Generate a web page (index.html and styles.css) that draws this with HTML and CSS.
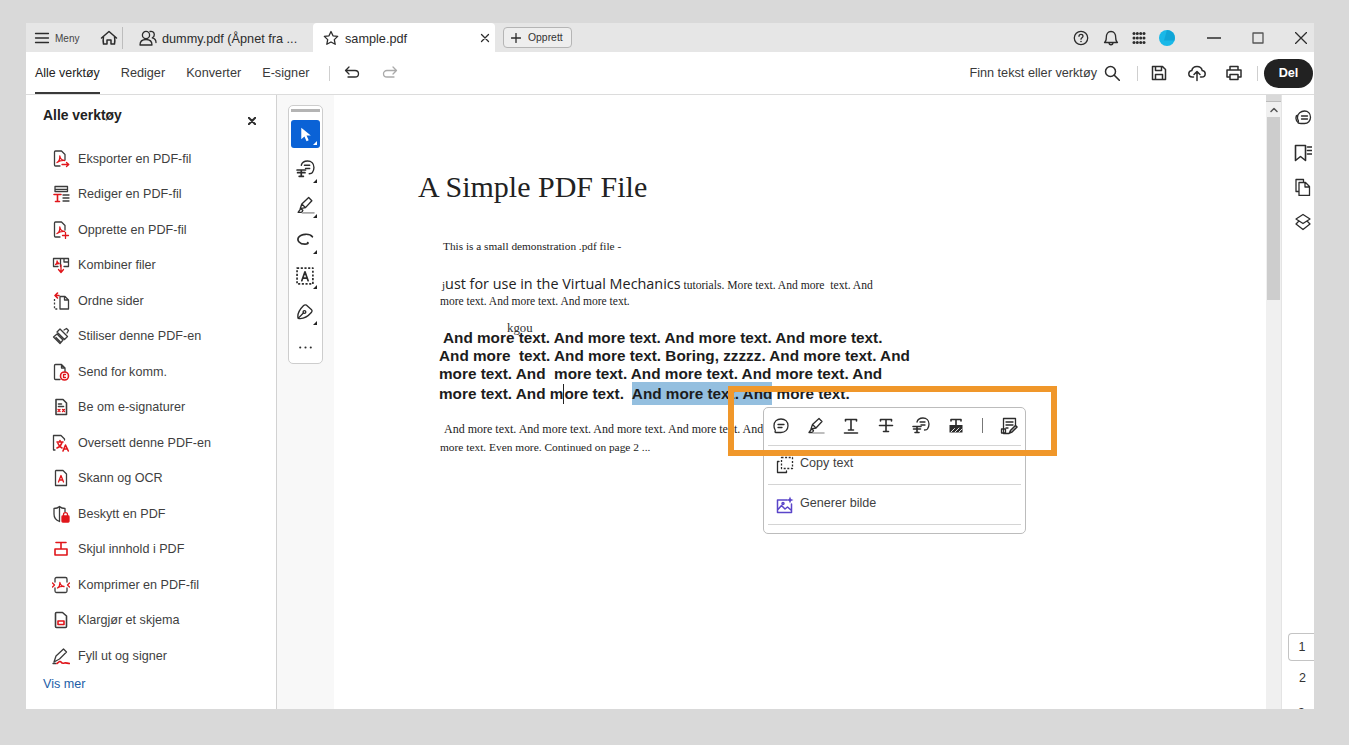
FILE: index.html
```html
<!DOCTYPE html>
<html lang="nb">
<head>
<meta charset="utf-8">
<title>sample.pdf</title>
<link rel="stylesheet" href="styles.css">
</head>
<body>
<div class="app">
  <header class="titlebar">
    <div class="menu">
      <svg class="ic16" viewBox="0 0 16 16"><path d="M1.500 3.500h13M1.500 8h13M1.500 12.500h13"/></svg>
      <span class="menu-label">Meny</span>
    </div>
    <svg class="ic18 home" viewBox="0 0 18 18"><path d="M1.500 9 9 2.500 16.500 9M3.500 7.500c-.5 3 -.5 5 0 7.500h3.500v-4h4v4h3.500c.5-2.500.5-4.500 0-7.500"/></svg>
    <div class="tab tab-dummy">
      <svg class="ic18" viewBox="0 0 18 18"><circle cx="7" cy="6" r="3.600"/><path d="M1 16c0-3.500 2.500-5.500 6-5.500s6 2 6 5.500zM11 2.500c2.500-.6 4.300 1 4.300 3.200 0 1.500-.8 2.600-2 3.200 2 .5 3.700 2.300 3.700 4.600"/></svg>
      <span class="tab-text">dummy.pdf (Åpnet fra ...</span>
    </div>
    <div class="tab tab-active">
      <svg class="ic16" viewBox="0 0 16 16"><path d="m8 1.500 2 4.300 4.700.6-3.400 3.200.9 4.700L8 12l-4.200 2.300.9-4.700L1.300 6.400 6 5.800z"/></svg>
      <span class="tab-text tab-name">sample.pdf</span>
      <svg class="ic10" viewBox="0 0 10 10"><path d="m1.500 1.500 7 7m0-7-7 7"/></svg>
    </div>
    <button class="create"><svg class="ic10" viewBox="0 0 10 10"><path d="M5 .5v9M.5 5h9"/></svg><span>Opprett</span></button>
    <div class="title-right">
      <svg class="ic16 t-help" viewBox="0 0 16 16"><circle cx="8" cy="8" r="6.700"/><path d="M6 6.300C6 5 7 4.400 8 4.400s2 .7 2 1.800c0 1.500-2 1.500-2 3"/><circle class="fill" cx="8" cy="11.500" r=".8"/></svg>
      <svg class="ic16 t-bell" viewBox="0 0 16 16"><path d="M1.500 12.500c1.500-1 1.800-2.500 1.800-5C3.300 4 5 1.500 8 1.500s4.700 2.500 4.700 6c0 2.500.3 4 1.800 5zM6 12.500c0 3 4 3 4 0"/></svg>
      <svg class="ic14 t-grid" viewBox="0 0 14 14"><g class="fill"><circle cx="2" cy="2.500" r="1.500"/><circle cx="5.300" cy="2.500" r="1.500"/><circle cx="8.700" cy="2.500" r="1.500"/><circle cx="12" cy="2.500" r="1.500"/><circle cx="2" cy="7" r="1.500"/><circle cx="5.300" cy="7" r="1.500"/><circle cx="8.700" cy="7" r="1.500"/><circle cx="12" cy="7" r="1.500"/><circle cx="2" cy="11.500" r="1.500"/><circle cx="5.300" cy="11.500" r="1.500"/><circle cx="8.700" cy="11.500" r="1.500"/><circle cx="12" cy="11.500" r="1.500"/></g></svg>
      <svg class="avatar" viewBox="0 0 16 16"><circle cx="8" cy="8" r="8" fill="#19b8e8"/><path d="M8 0a8 8 0 0 1 7.500 10.500H5z" fill="#0d9fd2" opacity=".75"/></svg>
      <svg class="ic14 t-min" viewBox="0 0 14 14"><path class="thick" d="M.5 7h13"/></svg>
      <svg class="ic12 t-max" viewBox="0 0 12 12"><rect x="1" y="1" width="10" height="10"/></svg>
      <svg class="ic12 t-close" viewBox="0 0 12 12"><path d="m.5.5 11 11m0-11-11 11"/></svg>
    </div>
  </header>

  <nav class="toolbar">
    <a class="nav nav-first">Alle verktøy</a>
    <a class="nav">Rediger</a>
    <a class="nav">Konverter</a>
    <a class="nav">E-signer</a>
    <span class="vsep sep-nav"></span>
    <svg class="ic16 undo" viewBox="0 0 16 16"><path d="M5 2 1.500 5.500 5 9M1.500 5.500H11c2 0 3.500 1.300 3.500 3.200S13 12 11 12H4"/></svg>
    <svg class="ic16 redo" viewBox="0 0 16 16"><path d="M11 2l3.500 3.500L11 9M14.500 5.500H5c-2 0-3.500 1.300-3.500 3.200S3 12 5 12h7"/></svg>
    <div class="tool-right">
      <span class="find">Finn tekst eller verktøy</span>
      <svg class="ic16 search" viewBox="0 0 16 16"><circle cx="6.500" cy="6.500" r="5"/><path class="thick" d="m10.300 10.300 5 5"/></svg>
      <span class="vsep sep-a"></span>
      <svg class="ic16 save" viewBox="0 0 16 16"><path d="M1.500 1.500h10l3 3v10h-13zM4.500 1.500v4h6v-4M4.500 14.500v-5h7v5"/></svg>
      <svg class="ic18 upload" viewBox="0 0 18 18"><path d="M5.500 13H4.200C2 13 .8 11.500.8 9.700c0-1.800 1.300-3 3-3.200C4.300 4 6.500 2.500 9 2.500s4.700 1.500 5.200 4c1.700.2 3 1.400 3 3.200 0 1.800-1.200 3.300-3.400 3.300h-1.300M9 16.500V8M6 10.500 9 7.500l3 3"/></svg>
      <svg class="ic16 print" viewBox="0 0 16 16"><path d="M4 5V1.500h8V5M4 12H1V5h14v7h-3M4 9.500h8v5H4z"/></svg>
      <span class="vsep sep-b"></span>
      <button class="share">Del</button>
    </div>
  </nav>

  <div class="main">
    <aside class="sidebar">
      <div class="side-head">
        <h2>Alle verktøy</h2>
        <svg class="ic8" viewBox="0 0 8 8"><path d="m.8.800 6.400 6.400m0-6.400L.8 7.200"/></svg>
      </div>
      <ul class="tools">
        <li><svg class="t-ic" viewBox="0 0 18 18"><path d="M8 16H3.500a1 1 0 0 1-1-1V2a1 1 0 0 1 1-1h6l3.500 3.500V10"/><path class="red" d="M5 12.500c2-1 3-3.500 2.800-6.500.3 2.500 2 4.200 4.700 4.500-3-.2-5.500.5-7.500 2zM10 14.500h6.500M14.500 12.500l2.300 2-2.300 2"/></svg><span>Eksporter en PDF-fil</span></li>
        <li><svg class="t-ic" viewBox="0 0 18 18"><path d="M3 1.500h12.500v5H3zM3 4.300h12.500M11 10h6M11 13h6M11 16h6"/><path class="red thick" d="M2 9.500h7M5.500 9.500v7M3.500 16.500h4"/></svg><span>Rediger en PDF-fil</span></li>
        <li><svg class="t-ic" viewBox="0 0 18 18"><path d="M8 16H3.500a1 1 0 0 1-1-1V2a1 1 0 0 1 1-1h6l3.500 3.500V9"/><path class="red" d="M5 12.500c2-1 3-3.500 2.800-6.500.3 2.500 2 4.200 4.700 4.500-3-.2-5.500.5-7.500 2zM13.500 11.500v6M10.500 14.500h6"/></svg><span>Opprette en PDF-fil</span></li>
        <li><svg class="t-ic" viewBox="0 0 18 18"><path d="M6 10.500H1.500v-8h7v8M8.500 2.500h8v8H12M12 2.500V6h4.500"/><path class="red" d="M3.500 8.500c1.300-.6 1.700-2 1.600-3.500.2 1.400 1 2.300 2 2.500-1.300 0-2.500.3-3.600 1zM9 9v7M6.500 13.500 9 16.500l2.500-3"/></svg><span>Kombiner filer</span></li>
        <li><svg class="t-ic" viewBox="0 0 18 18"><path d="M8 4.500h5l3.500 3.500v9H8zM12.500 4.500V8h4"/><path class="dash" d="M2.500 7v10h4"/><path class="red thick" d="M7 3.500H3.500M5.500 1 3 3.500 5.500 6"/></svg><span>Ordne sider</span></li>
        <li><svg class="t-ic" viewBox="0 0 18 18"><path d="m8 2 7.500 7.500-3 3L5 5zM1.500 10l3.500-3 6 6-3 3.500zM4 10.500l4 4M12 3l2.500-1.500 2 2L15 6"/></svg><span>Stiliser denne PDF-en</span></li>
        <li><svg class="t-ic" viewBox="0 0 18 18"><path d="M8 16.500H3.500a1 1 0 0 1-1-1v-13a1 1 0 0 1 1-1h6l3.500 3.500V9M9.500 1.500V5H13"/><circle class="red thick" cx="12.500" cy="13" r="4"/><path class="red" d="M13.500 11.500h-2v3h2"/></svg><span>Send for komm.</span></li>
        <li><svg class="t-ic" viewBox="0 0 18 18"><path class="thick" d="M4 1.500h7l3.500 3.500v11.500H4zM6.500 6h3M6.500 8.500h5"/><path class="red" d="m6 11.500 2 2m0-2-2 2M10.500 11.500l2 2m0-2-2 2"/></svg><span>Be om e-signaturer</span></li>
        <li><svg class="t-ic" viewBox="0 0 18 18"><path d="M3 16H1.500V1.500H9l3.500 3.500V6"/><path class="red thick" d="M5 8h6M8 6.500V8M10 8c-.5 3-2.500 5-5 6M6 9.500c.8 2 2 3.500 4 4.500M11 17l2.500-6 2.800 6M12 15h3.500"/></svg><span>Oversett denne PDF-en</span></li>
        <li><svg class="t-ic" viewBox="0 0 18 18"><path d="M4 1.500h7L14.500 5v11.500H3.500V2z"/><path class="red" d="m6.500 13 2.500-6.500 2.500 6.500M7.500 11h3"/></svg><span>Skann og OCR</span></li>
        <li><svg class="t-ic" viewBox="0 0 18 18"><path d="M7.500 16.500C4.500 15.500 2 13 2 9V3.500C4 3.500 6 3 7.500 1.500 9 3 11 3.500 13 3.500V7M7.500 1.500v15"/><rect class="redfill" x="10" y="11" width="7" height="6" rx=".8"/><path class="red" d="M11.500 11V9.500c0-2.500 4-2.500 4 0V11"/></svg><span>Beskytt en PDF</span></li>
        <li><svg class="t-ic" viewBox="0 0 18 18"><path class="red thick" d="M4 2.500h10M9 2.500v6M3 9h12v6H3z"/></svg><span>Skjul innhold i PDF</span></li>
        <li><svg class="t-ic" viewBox="0 0 18 18"><path d="M3 6V3a1.500 1.500 0 0 1 1.500-1.500h9A1.500 1.500 0 0 1 15 3v3M3 12v3a1.500 1.500 0 0 0 1.500 1.500h9A1.500 1.500 0 0 0 15 15v-3"/><path class="red" d="M5.500 12c1.500-1 2.500-3 2.400-5.500.3 2 1.600 3.500 4.100 4-2.500-.2-4.800.3-6.500 1.500zM.5 7l2 2-2 2M17.500 7l-2 2 2 2"/></svg><span>Komprimer en PDF-fil</span></li>
        <li><svg class="t-ic" viewBox="0 0 18 18"><path class="thick" d="M3.500 2.500a1 1 0 0 1 1-1h6L14.500 5v10.500a1 1 0 0 1-1 1h-9a1 1 0 0 1-1-1z"/><rect class="red thick" x="6" y="10" width="6" height="3.500"/></svg><span>Klargjør et skjema</span></li>
        <li><svg class="t-ic" viewBox="0 0 18 18"><path d="M2 15 4 9l7.500-7 3 3-7 7zM1 16.500h3"/><path class="red thick" d="M5 16.500c1.500-1 3-3 4-1.500s2 1.500 3.500 1 3 .5 5 .5"/></svg><span>Fyll ut og signer</span></li>
      </ul>
      <a class="more">Vis mer</a>
    </aside>

    <div class="strip">
      <div class="quick">
        <div class="grab"></div>
        <button class="q q-on"><svg viewBox="0 0 18 18"><path class="whitefill" d="M5 2.500v11l3-2.500 2 4.500 2-1-2-4.500h4z"/></svg></button>
        <button class="q"><svg viewBox="0 0 18 18"><path d="M5 5c.6-2.500 3-4 6-4 3.500 0 6 2.500 6 6 0 2-.5 3.500-1.500 5-.5.800-1.500 1-3 1M8 5h5M9 8h4"/><path class="thick" d="M1 9.500h8M5 9.500v6M3 15.500h4M1.500 12h7"/></svg></button>
        <button class="q"><svg viewBox="0 0 18 18"><path d="M4 12 5.500 7.500 12 1.500l3 3-6 6.500zM5.500 7.500l3.500 3.500M2 15.500l2.500-3.500 2 1.500-1 2z"/><path class="pale" d="M6 16h11"/></svg></button>
        <button class="q"><svg viewBox="0 0 18 18"><path class="thick" d="M15.500 5.500C13 2 5 2.500 2.500 6c-2 3 1 6.500 6 6.500 2.500 0 3.500-1 2.500-1.500"/></svg></button>
        <button class="q"><svg viewBox="0 0 18 18"><path class="thick dash2" d="M1 1h15v15H1z"/><path class="thick" d="m5.500 13 3-8.500 3 8.500M6.500 10.500h4"/></svg></button>
        <button class="q"><svg viewBox="0 0 18 18"><path d="M2 15.500c-1-4 1-8 5-12 .8-.8 2-1 3-.5l4.500 4c.8.800.8 2 0 3C11 14 7 16.500 2 15.500zM2 15.500l5-5"/><circle cx="8" cy="9.500" r="1.300"/></svg></button>
        <button class="q q-dots"><svg viewBox="0 0 18 18"><g class="fill"><circle cx="4" cy="9" r="1"/><circle cx="9" cy="9" r="1"/><circle cx="14" cy="9" r="1"/></g></svg></button>
      </div>
    </div>

    <section class="canvas">
      <h1>A Simple PDF File</h1>
      <p class="small l-one">This is a small demonstration .pdf file -</p>
      <p class="small l-two"><span class="j">j</span><span class="sans">ust for use in the Virtual Mechanics</span> tutorials. More text. And more&nbsp; text. And</p>
      <p class="small l-three">more text. And more text. And more text.</p>
      <div class="boldblock">
        <span class="kgou">kgou</span>
        <p class="first">And more text. And more text. And more text. And more text.</p>
        <p>And more&nbsp; text. And more text. Boring, zzzzz. And more text. And</p>
        <p>more text. And&nbsp; more text. And more text. And more text. And</p>
        <p>more text. And m<span class="caret"></span>ore text.&nbsp; <mark>And more text. And</mark> more text.</p>
      </div>
      <p class="small l-four">And more text. And more text. And more text. And more text. And</p>
      <p class="small l-five">more text. Even more. Continued on page 2 ...</p>

      <div class="popup">
        <div class="pop-icons">
          <svg viewBox="0 0 18 18"><path d="M9 2c4 0 7 2.500 7 6.800 0 4-3 6.700-7 6.700H4c-1.200 0-1-.8-.8-1.500.2-.8 0-1-.4-1.800C2.300 11.500 2 10.200 2 8.800 2 4.500 5 2 9 2zM6 7.500h6M6 10.500h4"/></svg>
          <svg viewBox="0 0 18 18"><path d="M4 12 5.500 7.500 12 1.500l3 3-6 6.500zM5.500 7.500l3.500 3.500M2 15.500l2.500-3.500 2 1.500-1 2z"/><path class="pale" d="M6 16h11"/></svg>
          <svg viewBox="0 0 18 18"><path class="thick" d="M3.500 4V2.500h11V4M9 2.500V13M6.500 13h5M2.500 16h13"/></svg>
          <svg viewBox="0 0 18 18"><path class="thick" d="M3.500 4V2.500h11V4M9 2.500v12M6.500 14.500h5M2.500 8.500h13"/></svg>
          <svg viewBox="0 0 18 18"><path d="M5 5c.6-2.500 3-4 6-4 3.500 0 6 2.500 6 6 0 2-.5 3.500-1.500 5-.5.800-1.500 1-3 1M8 5h5M9 8h4"/><path class="thick" d="M1 9.500h8M5 9.500v6M3 15.500h4M1.500 12h7"/></svg>
          <svg viewBox="0 0 18 18"><path class="thick" d="M4 4V2.500h10V4M9 2.500V8"/><rect class="fill" x="2.500" y="8" width="13" height="7.500"/><path class="wht" d="m4 15 3.500-3.500M8 15l4-4M12 15l3-3"/></svg>
          <span class="pop-sep"></span>
          <svg viewBox="0 0 18 18"><path d="M9 16.500H3.500v-15h12V8M6 5h7M6 8h7M6 11h2"/><rect x="1.500" y="12" width="4" height="4"/><path class="thick" d="m9.500 16 1-2.500 5-5 1.500 1.500-5 5z"/></svg>
        </div>
        <div class="pop-row pop-copy">
          <svg viewBox="0 0 18 18"><path class="dash" d="M5.500 1.500h11v11h-11z"/><path d="M3 5.500H1.500v11h9V15"/></svg>
          <span>Copy text</span>
        </div>
        <div class="pop-row">
          <svg viewBox="0 0 18 18"><path class="purple" d="M11 4H1.500v12.500h14V8M1.500 14l4-4.500 3.500 3.500 2.500-2 4 3.500"/><circle class="purple" cx="7" cy="7.500" r="1"/><path class="purplefill" d="m14 .5 1 2.500 2.500 1-2.500 1-1 2.500-1-2.500-2.500-1 2.500-1z"/></svg>
          <span>Generer bilde</span>
        </div>
      </div>
      <div class="callout"></div>
    </section>

    <div class="scroll">
      <div class="scroll-top"></div>
      <svg class="chev" viewBox="0 0 8 6"><path d="M1 4.500 4 1.500l3 3"/></svg>
      <div class="thumb"></div>
    </div>

    <aside class="rail">
      <svg viewBox="0 0 18 18"><path d="M4.500 14C2 12 1.500 9 2.500 6.500M10.500 2c3.500 0 6 2.500 6 6.200 0 3.600-2.500 6.300-6 6.300H7c-1.500 0-3-.5-3-1 .5-.8.500-1.800 0-2.500C3.500 10 3.500 9 3.500 8.200 3.500 4.500 7 2 10.500 2zM7.500 7h6M7.500 10h6"/></svg>
      <svg viewBox="0 0 18 18"><path class="thick" d="M1.500 1.500h10v15l-5-4-5 4zM13.500 3h4M13.500 6.500h4M13.500 10h4"/></svg>
      <svg viewBox="0 0 18 18"><path d="M4.500 13.500H2V1.500h7.500V4M5 4.500h6.500l4 4v9H5zM11 4.500V9h4.500"/></svg>
      <svg viewBox="0 0 18 18"><path d="M9 1.500 16 6l-7 4.500L2 6zM4.500 8.500 2 11l7 5.500 7-5.500-2.500-2.500"/></svg>
      <div class="pages">
        <div class="page page-on">1</div>
        <div class="page page-two">2</div>
        <div class="page page-cut">3</div>
      </div>
    </aside>
  </div>
</div>
</body>
</html>
```

FILE: styles.css
```css
* { box-sizing: border-box; }
html, body { margin: 0; height: 100%; }
body {
  background: #d9d9d9;
  padding: 23px 35px 36px 26px;
  font-family: "Liberation Sans", Arial, sans-serif;
  color: #2c2c2c;
  overflow: hidden;
}
svg { display: block; flex: none; fill: none; stroke: #2c2c2c; stroke-width: 1.3; stroke-linejoin: round; stroke-linecap: round; }
svg .fill { fill: #2c2c2c; stroke: none; }
svg .thick { stroke-width: 1.6; }
svg .red { stroke: #e0161b; }
svg .redfill { fill: #e0161b; stroke: #e0161b; }
svg .dash { stroke-dasharray: 2 1.600; stroke-linecap: butt; }
svg .dash2 { stroke-dasharray: 2 1.500; stroke-linecap: butt; }
svg .pale { stroke: #a9a9a9; stroke-width: 1.500; }
svg .wht { stroke: #e8e8e8; stroke-width: 1; }
svg .purple { stroke: #5a45c9; stroke-width: 1.500; }
svg .purplefill { fill: #5a45c9; stroke: none; }
svg .whitefill { fill: #fff; stroke: none; }
.ic8 { width: 8px; height: 8px; stroke-width: 2; }
.ic10 { width: 10px; height: 10px; }
.ic12 { width: 12px; height: 12px; }
.ic14 { width: 14px; height: 14px; }
.ic16 { width: 16px; height: 16px; }
.ic18 { width: 18px; height: 18px; }

.app { height: 686px; width: 1288px; display: flex; flex-direction: column; background: #fff; }

/* title bar */
.titlebar { height: 29px; background: #e6e6e6; display: flex; align-items: center; flex: none; }
.menu { display: flex; align-items: center; gap: 5px; padding-left: 8px; width: 74px; }
.menu-label { font-size: 10px; color: #444; padding-top: 2px; }
.home { margin-right: 4px; stroke-width: 1.500; }
.tab { height: 29px; display: flex; align-items: center; font-size: 12.700px; }
.tab-text { padding-top: 2px; }
.tab-dummy { width: 191px; border-left: 1px solid #bdbdbd; height: 22px; padding-left: 16px; gap: 5px; }
.tab-active { width: 182px; height: 29px; background: #fff; padding-left: 10px; border-radius: 4px 4px 0 0; }
.tab-name { margin-left: 6px; width: 135px; }
.create { margin-left: 8px; height: 21px; width: 69px; padding: 0 0 0 7px; border: 1px solid #b5b5b5; border-radius: 4px; background: #eee; display: flex; align-items: center; gap: 7px; font: 10.400px "Liberation Sans", Arial, sans-serif; color: #333; }
.title-right { margin-left: auto; display: flex; align-items: center; }
.t-help { margin-right: 14px; }
.t-bell { margin-right: 13px; }
.t-grid { margin-right: 13px; }
.avatar { width: 16px; height: 16px; stroke: none; margin-right: 32px; }
.t-min { margin-right: 31px; }
.t-max { margin-right: 31px; stroke: #555; }
.t-close { margin-right: 7px; }

/* toolbar */
.toolbar { height: 43px; flex: none; display: flex; align-items: center; padding-left: 9px; border-bottom: 1px solid #dcdcdc; font-size: 12.700px; color: #3a3a3a; }
.nav { margin-right: 21px; line-height: 42px; height: 42px; }
.nav-first { color: #222; font-size: 12.400px; border-bottom: 2px solid #3a3a3a; }
.vsep { width: 1px; height: 15px; background: #cfcfcf; flex: none; }
.undo { margin-left: 14px; }
.redo { margin-left: 22px; stroke: #aaa; }
.sep-nav { margin-left: -1px; }
.tool-right { margin-left: auto; display: flex; align-items: center; }
.find { margin-right: 7px; }
.search { margin-right: 17px; stroke-width: 1.500; }
.save { margin: 0 21px 0 13px; stroke-width: 1.500; }
.upload { margin-right: 20px; stroke-width: 1.500; }
.print { margin-right: 15px; stroke-width: 1.500; }
.share { margin: 0 1px 0 6px; width: 49px; height: 29px; background: #222; color: #fff; border: 0; border-radius: 15px; font: bold 12.700px "Liberation Sans", Arial, sans-serif; }

/* main */
.main { flex: 1; display: flex; min-height: 0; }
.sidebar { width: 251px; flex: none; border-right: 1px solid #d2d2d2; display: flex; flex-direction: column; }
.side-head { display: flex; align-items: center; justify-content: space-between; padding: 12px 20px 0 17px; height: 38px; }
.side-head h2 { margin: 0; font-size: 13.900px; font-weight: bold; color: #222; position: relative; top: -5px; }
.side-head svg { margin-top: 2px; }
.tools { list-style: none; margin: 8px 0 0; padding: 0 0 0 26px; }
.tools li { height: 35.500px; display: flex; align-items: center; gap: 8px; font-size: 12.600px; color: #3f3f3f; }
.t-ic { width: 18px; height: 18px; stroke-width: 1.300; stroke: #3c3c3c; }
.more { margin: 3px 0 0 17px; font-size: 12.600px; color: #1c5ea8; }

.strip { width: 57px; flex: none; background: #f8f8f8; padding: 10px 0 0 11px; }
.quick { width: 35px; height: 259px; background: #fff; border: 1px solid #cdcdcd; border-radius: 5px; padding: 3px 2px; display: flex; flex-direction: column; align-items: center; }
.grab { width: 29px; height: 3px; background: #b4b4b4; flex: none; }
.q { width: 29px; height: 35.500px; flex: none; border: 0; padding: 0; background: none; display: flex; align-items: center; justify-content: center; position: relative; }
.q svg { width: 19px; height: 19px; }
.q::after { content: ""; position: absolute; right: 3px; bottom: 5px; border: 2.500px solid transparent; border-right-color: #222; border-bottom-color: #222; }
.q-on { height: 28px; margin: 8px 0 4px; background: #0a62d6; border-radius: 3px; }
.q-on::after { border-right-color: #fff; border-bottom-color: #fff; bottom: 3px; }
.q-dots::after { display: none; }

/* page */
.canvas { width: 932px; flex: none; position: relative; padding: 0 0 0 84px; background: #fff; font-family: "Liberation Serif", "Times New Roman", serif; color: #222; }
.canvas h1 { margin: 72px 0 0; font-size: 30px; line-height: 40px; font-weight: normal; color: #222; }
.small { margin: 0; font-size: 11.500px; line-height: 18px; height: 18px; }
.l-one { margin: 30px 0 0 25px; font-size: 11.300px; }
.l-two { margin: 20px 0 0 24px; white-space: nowrap; font-size: 11.600px; }
.j { font-size: 11px; }
.sans { font-family: "Open Sans", sans-serif; font-size: 14.400px; }
.l-three { margin: -1px 0 0 22px; }
.boldblock { position: relative; margin: 19px 0 0 21px; font-family: "Liberation Sans", Arial, sans-serif; font-weight: bold; font-size: 15.300px; line-height: 18.200px; color: #1c1c1c; white-space: nowrap; }
.boldblock p { margin: 0; height: 18.200px; }
.boldblock .first { padding-left: 4px; }
.kgou { position: absolute; left: 68px; top: -8px; font: normal 12.800px "Liberation Serif", serif; color: #333; }
.caret { display: inline-block; width: 1px; height: 20px; background: #222; vertical-align: -5px; }
mark { background: #94bfdf; color: inherit; padding: 3px 0; }
.l-four { margin: 18px 0 0 26px; white-space: nowrap; font-size: 12px; }
.l-five { margin: 0 0 0 22px; font-size: 11.400px; }

.popup { position: absolute; left: 429px; top: 312px; width: 263px; height: 127px; background: #fff; border: 1px solid #bcbcbc; border-radius: 5px; padding: 0 4px; font-family: "Liberation Sans", Arial, sans-serif; }
.pop-icons { height: 38px; display: flex; align-items: center; padding: 0 0 2px 4px; gap: 17px; border-bottom: 1px solid #d4d4d4; }
.pop-icons svg { width: 18px; height: 18px; }
.pop-sep { width: 1px; height: 15px; background: #777; }
.pop-row { height: 40px; display: flex; align-items: center; gap: 6px; padding-left: 8px; border-bottom: 1px solid #d4d4d4; font-size: 12.600px; color: #3f3f3f; }
.pop-copy { height: 39px; }
.pop-row svg { width: 18px; height: 18px; }
.pop-row span { position: relative; top: -2px; }
.callout { position: absolute; left: 394px; top: 291px; width: 329px; height: 70px; border: 6px solid #f0972a; }

/* scrollbar */
.scroll { width: 15px; flex: none; background: #f0f0f0; display: flex; flex-direction: column; align-items: center; }
.scroll-top { width: 15px; height: 7px; background: #d9d9d9; border-bottom: 1px solid #bbb; }
.chev { width: 8px; height: 6px; margin: 5px 0 4px; stroke: #555; stroke-width: 1.500; }
.thumb { width: 13px; height: 183px; background: #cdcdcd; }

/* right rail */
.rail { flex: 1; border-left: 1px solid #e4e4e4; display: flex; flex-direction: column; align-items: center; padding: 14px 0 0 9px; position: relative; overflow: hidden; }
.rail > svg { width: 18px; height: 18px; margin-bottom: 16.500px; }
.pages { position: absolute; top: 538px; left: 6px; width: 26px; font-size: 12.500px; color: #333; text-align: center; }
.page { height: 28px; line-height: 26px; padding-left: 1px; }
.page-on { border: 1px solid #c4c4c4; border-right: 0; border-radius: 4px 0 0 4px; }
.page-two { margin-top: 4px; padding-left: 3px; }
.page-cut { margin-top: 7px; }
```
